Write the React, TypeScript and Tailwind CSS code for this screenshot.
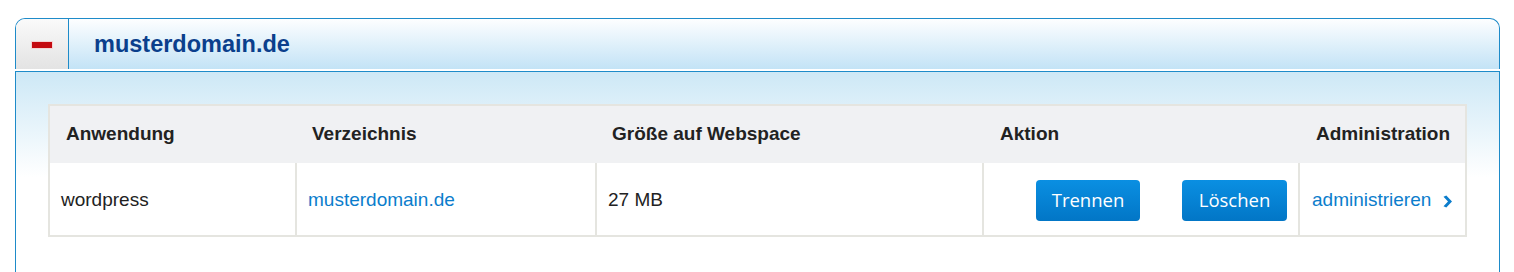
const cols = "grid grid-cols-[245px_300px_387px_316px_167px]";

const Chevron = () => (
    <svg width="11" height="13" viewBox="0 0 11 13" className="ml-[11px] mt-[1px] shrink-0">
        <path d="M1.5 1.8 L4.3 0.5 L10 6.5 L4.3 12.5 L1.5 11.2 L6 6.5 Z" fill="#0b7dcc" />
    </svg>
);

const Button = ({ label, width }: { label: string; width: string }) => (
    <button
        className={`${width} h-[41px] rounded-[4px] bg-[linear-gradient(to_bottom,#0a8fe2,#0276c6)] text-white text-[18.5px] font-['Open_Sans',sans-serif] leading-none`}
    >
        {label}
    </button>
);

export default function App() {
    return (
        <main className="pt-[18px] pl-[15px] font-['Liberation_Sans',Arial,sans-serif] text-[#222]">
            <div className="w-[1485px]">
                {/* Header */}
                <div className="flex h-[51px] border border-b-0 border-[#1e8bc9] rounded-t-[10px] overflow-hidden bg-[linear-gradient(to_bottom,#fdfeff,#c3e3f6)]">
                    <div className="flex w-[53px] items-center justify-center border-r border-[#1e8bc9] bg-[linear-gradient(to_bottom,#fafafa,#e3e3e3)]">
                        <div className="mt-[2px] h-[6px] w-[20px] bg-[#c40a10] shadow-[0_0_0_1px_#f4d4d4]" />
                    </div>
                    <h1 className="flex items-center pl-[25px] pt-[1px] text-[23.5px] font-bold text-[#0b3f8c]">musterdomain.de</h1>
                </div>

                {/* Body */}
                <div className="mt-[2px] h-[201px] border border-b-0 border-[#1e8bc9] bg-[linear-gradient(to_bottom,#cde8f6_0px,#ffffff_105px)] p-8">
                    <div className="border-2 border-[#e5e5e0] bg-white text-[19px]">
                        <div className={`${cols} h-[57px] items-center bg-[#f0f1f3] font-bold`}>
                            <div className="pl-[16px]">Anwendung</div>
                            <div className="pl-[17px]">Verzeichnis</div>
                            <div className="pl-[17px]">Größe auf Webspace</div>
                            <div className="pl-[18px]">Aktion</div>
                            <div className="pl-[18px]">Administration</div>
                        </div>
                        <div className={`${cols} h-[72px]`}>
                            <div className="flex items-center pl-[11px] pt-[3px]">wordpress</div>
                            <div className="flex items-center border-l-2 border-[#e5e5e0] pl-[11px] pt-[3px] text-[#0b7dcc]">musterdomain.de</div>
                            <div className="flex items-center border-l-2 border-[#e5e5e0] pl-[11px] pt-[3px]">27 MB</div>
                            <div className="flex items-center justify-end gap-[42px] border-l-2 border-[#e5e5e0] pr-[11px] pt-[2px]">
                                <Button label="Trennen" width="w-[104px]" />
                                <Button label="Löschen" width="w-[105px]" />
                            </div>
                            <div className="flex items-center border-l-2 border-[#e5e5e0] pl-[12px] pt-[3px] text-[#0b7dcc]">
                                administrieren
                                <Chevron />
                            </div>
                        </div>
                    </div>
                </div>
            </div>
        </main>
    );
}
